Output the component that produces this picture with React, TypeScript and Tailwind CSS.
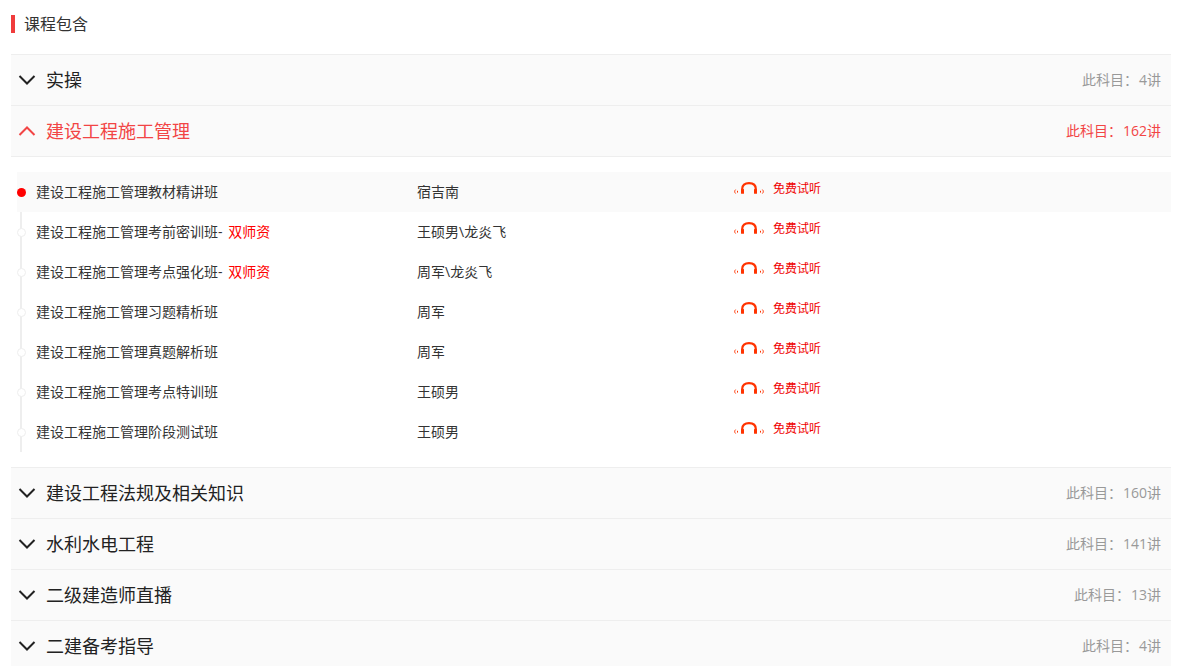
const FONT = "font-['Open_Sans','Noto_Sans_CJK_SC',sans-serif]";

function Chevron({ up, color }: { up?: boolean; color: string }) {
  return (
    <svg width="18" height="12" viewBox="0 0 18 12" fill="none" className="shrink-0">
      <path d={up ? "M1.5 10L9 2.5L16.5 10" : "M1.5 2L9 9.5L16.5 2"} stroke={color} strokeWidth="2" />
    </svg>
  );
}

function Headset() {
  return (
    <svg width="32" height="16" viewBox="0 0 32 16" fill="none" className="shrink-0">
      <path d="M9.2 11V8C9.2 4.2 11.8 2.1 16 2.1C20.2 2.1 22.8 4.2 22.8 8V11" stroke="#ff3300" strokeWidth="2.2" />
      <rect x="8" y="8" width="3" height="4.8" rx="0.5" fill="#ff3300" />
      <rect x="21" y="8" width="3" height="4.8" rx="0.5" fill="#ff3300" />
      <path d="M2.6 8.6C1.4 9.8 1.4 11.3 2.6 12.5" stroke="#ff3300" strokeWidth="1" />
      <path d="M4.5 9.8V11.6" stroke="#ff3300" strokeWidth="1" />
      <path d="M29.4 8.6C30.6 9.8 30.6 11.3 29.4 12.5" stroke="#ff3300" strokeWidth="1" />
      <path d="M27.5 9.8V11.6" stroke="#ff3300" strokeWidth="1" />
    </svg>
  );
}

function Section({ title, count, open }: { title: string; count: number; open?: boolean }) {
  return (
    <div className={`flex h-[51px] items-center justify-between border-t border-[#eeeeee] bg-[#fafafa] pl-[7px] pr-[10px] ${open ? "border-b h-[52px] text-[#f24545]" : "text-[#222222]"}`}>
      <div className="flex items-center gap-[10px]">
        <Chevron up={open} color={open ? "#f24545" : "#222222"} />
        <span className="text-[18px] leading-[24px]">{title}</span>
      </div>
      <span className={`-translate-y-px text-[14px] ${open ? "text-[#f24545]" : "text-[#999999]"}`}>
        此科目：<span className="ml-px">{count}讲</span>
      </span>
    </div>
  );
}

const rows: { name: string; tag?: string; teacher: string }[] = [
  { name: "建设工程施工管理教材精讲班", teacher: "宿吉南" },
  { name: "建设工程施工管理考前密训班- ", tag: "双师资", teacher: "王硕男\\龙炎飞" },
  { name: "建设工程施工管理考点强化班- ", tag: "双师资", teacher: "周军\\龙炎飞" },
  { name: "建设工程施工管理习题精析班", teacher: "周军" },
  { name: "建设工程施工管理真题解析班", teacher: "周军" },
  { name: "建设工程施工管理考点特训班", teacher: "王硕男" },
  { name: "建设工程施工管理阶段测试班", teacher: "王硕男" },
];

function Row({ name, tag, teacher, first }: { name: string; tag?: string; teacher: string; first: boolean }) {
  return (
    <div className={`relative flex h-10 items-center pl-5 text-[14px] text-[#333333] ${first ? "bg-[#fafafa]" : ""}`}>
      {!first && <span className="absolute bottom-0 left-[3px] top-0 w-[2px] bg-[#eeeeee]" />}
      <span className={`absolute left-0 top-[15.5px] h-[9px] w-[9px] rounded-full ${first ? "bg-[#ff0000]" : "border border-[#eeeeee] bg-white"}`} />
      <div className="w-[380px] shrink-0 -translate-x-px -translate-y-px">
        {name}
        {tag && <span className="ml-[2px] text-[#ff0000]">{tag}</span>}
      </div>
      <div className="w-[316px] shrink-0 -translate-y-px">{teacher}</div>
      <div className="flex -translate-y-[3px] items-center gap-2 text-[12px] text-[#f00000]">
        <Headset />
        <span>免费试听</span>
      </div>
    </div>
  );
}

export default function App() {
  return (
    <div className={`h-[666px] w-[1182px] overflow-hidden bg-white px-[11px] ${FONT}`}>
      <div className="flex h-[54px] items-start pt-[15px]">
        <span className="h-[18px] w-1 bg-[#f03c3c]" />
        <span className="ml-[10px] -translate-x-px text-[16px] leading-[18px] text-[#333333]">课程包含</span>
      </div>
      <Section title="实操" count={4} />
      <Section title="建设工程施工管理" count={162} open />
      <div className="ml-[6px] pb-[15px] pt-[15px]">
        {rows.map((r, i) => (
          <Row key={r.name} {...r} first={i === 0} />
        ))}
      </div>
      <Section title="建设工程法规及相关知识" count={160} />
      <Section title="水利水电工程" count={141} />
      <Section title="二级建造师直播" count={13} />
      <Section title="二建备考指导" count={4} />
    </div>
  );
}
